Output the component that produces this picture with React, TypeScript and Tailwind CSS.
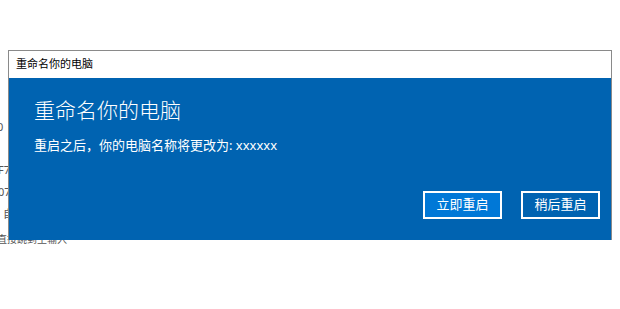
const font = { fontFamily: '"Noto Sans", "Noto Sans CJK SC", sans-serif' };

function BackgroundPage() {
  return (
    <div className="text-[11px] leading-[14px] text-[#555]" style={font}>
      <div className="h-[120px]" />
      <div className="-ml-[3px]">0</div>
      <div className="h-[29px]" />
      <div className="-ml-[2px]">F7</div>
      <div className="h-[8px]" />
      <div className="-ml-[2px]">07</div>
      <div className="h-[8px]" />
      <div className="ml-[3px]">自</div>
      <div className="h-[11px]" />
      <div className="-ml-[3px] text-[10px]">直接跳到主输入</div>
    </div>
  );
}

function RenameDialog() {
  return (
    <div
      className="absolute left-[8px] top-[50px] flex h-[190px] w-[604px] flex-col border border-[#8a8a8a] border-b-0 bg-white"
      style={font}
    >
      <div className="flex h-[27px] items-center pl-[7px] text-[11px] text-black">重命名你的电脑</div>
      <div className="flex flex-1 flex-col bg-[#0063b1] pl-[25px] pr-[11px] text-white">
        <h1 className="mt-[18px] text-[21px] font-light leading-[28px]">重命名你的电脑</h1>
        <p className="mt-[12px] text-[13px] leading-[18px]">重启之后，你的电脑名称将更改为: xxxxxx</p>
        <div className="mt-auto mb-[21px] flex justify-end gap-[19px]">
          <button className="h-[28px] w-[79px] border-2 border-white bg-[#0078d7] text-[13px] text-white">
            立即重启
          </button>
          <button className="h-[28px] w-[79px] border-2 border-white bg-[#0063b1] text-[13px] text-white">
            稍后重启
          </button>
        </div>
      </div>
    </div>
  );
}

export default function App() {
  return (
    <div className="relative h-[309px] w-[620px] overflow-hidden bg-white">
      <BackgroundPage />
      <RenameDialog />
    </div>
  );
}
